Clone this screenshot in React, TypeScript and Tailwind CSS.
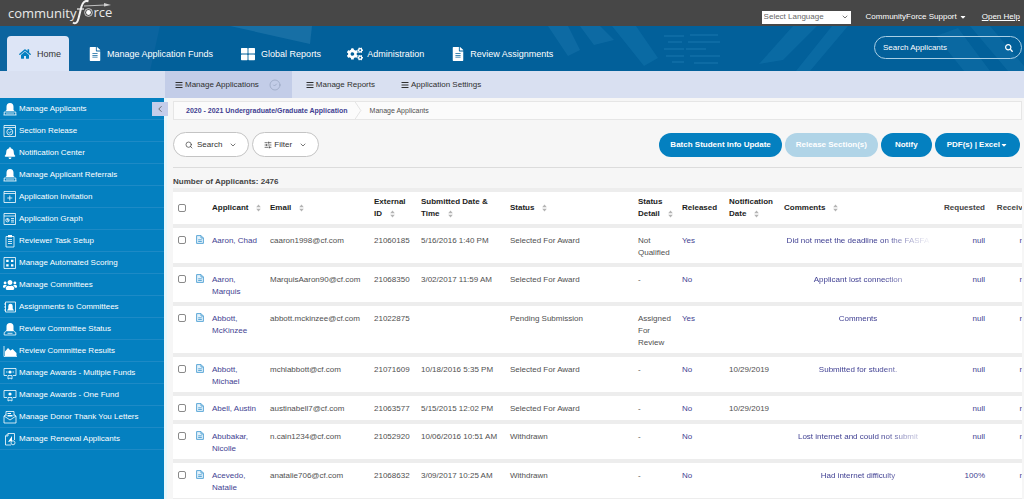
import type { ReactNode } from 'react';
import { FaBars, FaBell, FaCaretDown, FaCogs, FaFileAlt, FaHome, FaSearch, FaThLarge, FaUsers } from 'react-icons/fa';
import { ChevronDown, ChevronLeft, CircleCheck, Search, SlidersHorizontal } from 'lucide-react';

type Applicant = {
  name: string;
  email: string;
  id: string;
  submitted: string;
  status: string;
  detail: string;
  released: string;
  notified: string;
  comment: string;
  requested: string;
};

const applicants: Applicant[] = [
  { name: 'Aaron, Chad', email: 'caaron1998@cf.com', id: '21060185', submitted: '5/16/2016 1:40 PM', status: 'Selected For Award', detail: 'Not Qualified', released: 'Yes', notified: '', comment: 'Did not meet the deadline on the FASFA', requested: 'null' },
  { name: 'Aaron, Marquis', email: 'MarquisAaron90@cf.com', id: '21068350', submitted: '3/02/2017 11:59 AM', status: 'Selected For Award', detail: '-', released: 'No', notified: '', comment: 'Applicant lost connection', requested: 'null' },
  { name: 'Abbott, McKinzee', email: 'abbott.mckinzee@cf.com', id: '21022875', submitted: '', status: 'Pending Submission', detail: 'Assigned For Review', released: 'Yes', notified: '', comment: 'Comments', requested: 'null' },
  { name: 'Abbott, Michael', email: 'mchlabbott@cf.com', id: '21071609', submitted: '10/18/2016 5:35 PM', status: 'Selected For Award', detail: '-', released: 'No', notified: '10/29/2019', comment: 'Submitted for student.', requested: 'null' },
  { name: 'Abell, Austin', email: 'austinabell7@cf.com', id: '21063577', submitted: '5/15/2015 12:02 PM', status: 'Selected For Award', detail: '-', released: 'No', notified: '10/29/2019', comment: '', requested: 'null' },
  { name: 'Abubakar, Nicolle', email: 'n.cain1234@cf.com', id: '21052920', submitted: '10/06/2016 10:51 AM', status: 'Withdrawn', detail: '-', released: 'No', notified: '', comment: 'Lost internet and could not submit', requested: 'null' },
  { name: 'Acevedo, Natalie', email: 'anatalie706@cf.com', id: '21068632', submitted: '3/09/2017 10:25 AM', status: 'Withdrawn', detail: '-', released: 'No', notified: '', comment: 'Had internet difficulty', requested: '100%' },
];

function Glyph({ children }: { children: ReactNode }) {
  return (
    <svg viewBox="0 0 14 14" className="w-3.5 h-3.5 shrink-0" fill="none" stroke="white" strokeWidth="0.8">
      {children}
    </svg>
  );
}

const applicantGlyph = (
  <Glyph>
    <path d="M3.5 8V4.8a3.5 3.8 0 0 1 7 0V8l1 1H2.5z" fill="white" stroke="none" />
    <path d="M1.2 13V10h11.6v3M0.5 13h13M4 11v1.5M6 11v1.5M8 11v1.5M10 11v1.5" />
  </Glyph>
);

const sideLinks: { label: string; icon: ReactNode }[] = [
  { label: 'Manage Applicants', icon: applicantGlyph },
  { label: 'Section Release', icon: <Glyph><path d="M1 1.5h11.5v11H1zM1 3.5h11.5" /><circle cx="6.8" cy="8" r="3" /><path d="M5.4 8l1.1 1.1L8.4 7" /></Glyph> },
  { label: 'Notification Center', icon: <FaBell className="w-3.5 h-3 shrink-0 text-white" /> },
  { label: 'Manage Applicant Referrals', icon: applicantGlyph },
  { label: 'Application Invitation', icon: <Glyph><path d="M1 1.5h11.5v11H1zM1 3.5h11.5M6.8 5.5v5M4.3 8h5" /></Glyph> },
  { label: 'Application Graph', icon: <Glyph><path d="M1 1.5h11.5v11H1zM1 4h11.5M8 6.5h3M8 8.3h3M8 10h3" /><circle cx="4.5" cy="8.2" r="1.7" /><path d="M4.5 6.5v1.8h1.6" /></Glyph> },
  { label: 'Reviewer Task Setup', icon: <Glyph><path d="M3 2.5h8v10.5H3zM5 5.5h4M5 7.5h4M5 9.5h4" /><path d="M5 1h4v2.4H5z" fill="white" stroke="none" /></Glyph> },
  { label: 'Manage Automated Scoring', icon: <Glyph><path d="M1 1.5h11.5v11H1z" /><path d="M3.2 3.8h2.4v2.2H3.2zM8 3.8h2.4v2.2H8zM3.2 8.3h2.4v2.2H3.2zM8 8.3h2.4v2.2H8z" fill="white" stroke="none" /></Glyph> },
  { label: 'Manage Committees', icon: <FaUsers className="w-3.5 h-3.5 shrink-0 text-white" /> },
  { label: 'Assignments to Committees', icon: <Glyph><path d="M2.5 2h10v10h-10zM1 4h2M1 7h2M1 10h2" /><path d="M5.3 8.5V6a2.2 2.2 0 0 1 4.4 0v2.5l1.3 2H4z" fill="white" stroke="none" /></Glyph> },
  { label: 'Review Committee Status', icon: <Glyph><path d="M3.5 8V4.5a3.5 3.5 0 0 1 7 0V8l1 1.2H2.5z" fill="white" stroke="none" /><path d="M3 9.5L1.2 10.5V13h11.6v-2.5L11 9.5M4.5 11.3h5" /></Glyph> },
  { label: 'Review Committee Results', icon: <Glyph><path d="M1 2v10.5h13" /><path d="M2 12V7.5l3-3.5 2.5 2.5L9.5 5l4 4v3z" fill="white" stroke="none" /></Glyph> },
  { label: 'Manage Awards - Multiple Funds', icon: <Glyph><path d="M4 9.5H1v-7h12v7h-3M3 6h1.5M9.5 6H11" /><circle cx="7" cy="6" r="1.6" fill="white" stroke="none" /><path d="M5 9.5h4v3.5l-2-1-2 1z" /></Glyph> },
  { label: 'Manage Awards - One Fund', icon: <Glyph><path d="M4 9.5H1v-7h12v7h-3" /><circle cx="7" cy="6" r="1.6" fill="white" stroke="none" /><path d="M5 9.5h4v3.5l-2-1-2 1z" /></Glyph> },
  { label: 'Manage Donor Thank You Letters', icon: <Glyph><path d="M3 6V1.5h8V6M1 6l6 4 6-4v7H1zM1 6l2-1.5M13 6l-2-1.5" /><path d="M4.5 3h3.5v1H4.5zM4.5 5h5v1.5H4.5z" fill="white" stroke="none" /></Glyph> },
  { label: 'Manage Renewal Applicants', icon: <Glyph><path d="M5 1.5h6.5V8M5 1.5L2.5 4v9H8M5 1.5V4H2.5" /><path d="M5 10l4-6v5z" fill="white" stroke="none" /><circle cx="10" cy="10.8" r="2" /></Glyph> },
];

// Keeps the arrows on the same line as the last word of the heading
function SortLabel({ children }: { children: ReactNode }) {
  return (
    <span className="whitespace-nowrap">
      {children}
      <svg viewBox="0 0 5 8" className="inline-block w-[5px] h-2 ml-2" fill="#b4b4b4">
        <path d="M2.5 0.5L4.8 3.2H0.2zM2.5 7.5L4.8 4.8H0.2z" />
      </svg>
    </span>
  );
}

function DocIcon() {
  return (
    <svg viewBox="0 0 8 9" className="w-2 h-[9px]" fill="#e4f2fb" stroke="#4d9fd3" strokeWidth="0.9">
      <path d="M0.6 0.6h4.4L7.4 3v5.4H0.6zM5 0.6V3h2.4M2.2 4.8h3.6M2.2 6.5h3.6" />
    </svg>
  );
}

function Logo() {
  return (
    <a href="#" aria-label="communityforce" className="flex items-center h-full text-[#e9e9e9] font-['Open_Sans',sans-serif] text-[13px] leading-none">
      <span>community</span>
      <svg viewBox="0 0 37 26" className="w-[37px] h-[26px] -ml-1 overflow-visible" aria-hidden="true">
        <path d="M0 22.5c2.5 2 4.5 0 5.5-4L8.5 6.5C9.5 2.500 12 0 15.500 1.200" fill="none" stroke="#f2f2f2" strokeWidth="2" />
        <path d="M4 9h7" stroke="#f2f2f2" strokeWidth="1.2" />
        <path d="M11 6L32 5" stroke="#cfcfcf" strokeWidth="0.9" />
        <path d="M31 3l7 2-7 1.5z" fill="#cfcfcf" />
        <circle cx="15.5" cy="12.5" r="3.9" fill="none" stroke="#d9d9d9" strokeWidth="0.9" />
        <circle cx="15.5" cy="12.5" r="2.4" fill="#ffffff" />
        <text x="20.5" y="17" fill="#e9e9e9" fontSize="13">rce</text>
      </svg>
    </a>
  );
}

function HeaderPattern() {
  return (
    <svg viewBox="0 0 1024 45" preserveAspectRatio="xMidYMid slice" className="absolute inset-0 w-full h-full" aria-hidden="true">
      <path d="M0 0h160L150 45H0z" fill="#1468a3" opacity="0.5" />
      <path d="M230 0h82l-2 18z" fill="#4a93c0" opacity="0.3" />
      <path d="M548 0h20l12 24-12 6zM580 0h20l14 14-20 5z" fill="#3a94c8" opacity="0.2" />
      <path d="M612 0h24l22 32-14 8zM793 0h24l-34 34-24 4zM832 0h16l-38 45h-14z" fill="#2b8ec6" opacity="0.22" />
      <path d="M664 10h20M690 9h28M668 16h14M688 16h32M664 23h20M686 23h20M666 30h18M690 30h30M672 36h12M694 37h24" stroke="#3a98cc" strokeWidth="2" opacity="0.2" />
      <path d="M936 10l22-8 32 43h-26zM970 0h20l34 40v5h-16z" fill="#3b98cc" opacity="0.15" />
    </svg>
  );
}

export default function App() {
  return (
    <div className="min-h-screen flex flex-col overflow-hidden bg-[#f6f6f6] font-['Liberation_Sans',Arial,sans-serif] text-[8px] leading-3 text-[#505050]">
      <header>
        <div className="flex justify-between h-[26px] pl-2 pr-1 bg-[#474747] text-white">
          <Logo />
          <div className="flex items-center gap-[15px] pt-2">
            <div className="relative">
              <select aria-label="Select Language" className="block w-[89px] h-[13px] pl-0.5 appearance-none bg-white text-[#666]">
                <option>Select Language</option>
              </select>
              <ChevronDown className="absolute right-0.5 top-0.5 w-2 h-2 text-[#333] pointer-events-none" />
            </div>
            <button className="flex items-center gap-0.5">
              CommunityForce Support <FaCaretDown className="w-2 h-2" />
            </button>
            <a href="#" className="underline">Open Help</a>
          </div>
        </div>

        <div className="relative flex justify-between h-[45px] bg-[#02609a]">
          <HeaderPattern />
          <nav className="relative flex items-end pl-[7px] text-[9px] text-white">
            <a href="#" className="flex items-center gap-1.5 h-[35px] pl-3 pr-2 rounded-t bg-[#dde5f6] text-[#333]">
              <FaHome className="w-3 h-3 text-[#0480c0]" /> Home
            </a>
            <a href="#" className="flex items-center gap-1.5 h-[35px] ml-5">
              <FaFileAlt className="w-3 h-3.5" /> Manage Application Funds
            </a>
            <a href="#" className="flex items-center gap-1.5 h-[35px] ml-7">
              <FaThLarge className="w-3.5 h-3.5" /> Global Reports
            </a>
            <a href="#" className="flex items-center gap-1 h-[35px] ml-[26px]">
              <FaCogs className="w-4 h-4" /> Administration
            </a>
            <a href="#" className="flex items-center gap-1.5 h-[35px] ml-7">
              <FaFileAlt className="w-3 h-3.5" /> Review Assignments
            </a>
          </nav>
          <form className="relative flex items-center self-start w-[148px] h-[23px] mt-2.5 mr-0.5 px-2 rounded-full border border-[#a9cfe5]">
            <input type="text" aria-label="Search Applicants" placeholder="Search Applicants" className="min-w-0 flex-1 bg-transparent text-white placeholder:text-white outline-none" />
            <button type="button" aria-label="Search"><FaSearch className="w-2 h-2 text-white" /></button>
          </form>
        </div>

        <nav className="flex h-[27px] pl-[165px] bg-[#d9e0f1] text-[#2f2f2f]">
          <a href="#" className="flex items-center gap-0.5 pl-2.5 pr-[11px] bg-[#c3cde8]">
            <FaBars className="w-2 h-2" /> Manage Applications
            <CircleCheck className="w-3 h-3 ml-2 text-[#97a4bf]" strokeWidth={1.5} />
          </a>
          <a href="#" className="flex items-center gap-0.5 ml-3.5"><FaBars className="w-2 h-2" /> Manage Reports</a>
          <a href="#" className="flex items-center gap-0.5 ml-[26px]"><FaBars className="w-2 h-2" /> Application Settings</a>
        </nav>
      </header>

      <div className="flex flex-1">
        <aside className="relative w-[164px] shrink-0 bg-[#0480c0] text-white">
          <ul>
            {sideLinks.map((link) => (
              <li key={link.label}>
                <a href="#" className="flex items-center gap-0.5 h-[22px] pl-[3px] border-b border-[#1d8ac6]">
                  {link.icon}
                  {link.label}
                </a>
              </li>
            ))}
          </ul>
          <button aria-label="Collapse menu" className="absolute top-1 -right-1 flex items-center justify-center w-4 h-3.5 bg-[#c5cdea] text-[#555]">
            <ChevronLeft className="w-2.5 h-2.5" />
          </button>
        </aside>

        <main className="flex-1 min-w-0 pl-1.5 pr-0.5 border-l-3 border-[#e6f7fd]">
          <div className="flex items-stretch h-[19px] mt-[3px] pl-3 border border-[#e6e6e6] bg-[#fbfbfb] text-[7px]">
            <a href="#" className="flex items-center font-bold text-[#3f3f92]">2020 - 2021 Undergraduate/Graduate Application</a>
            <svg viewBox="0 0 8 18" className="w-2 ml-1.5" fill="none" stroke="#e2e2e2">
              <path d="M1 0l6 9-6 9" />
            </svg>
            <span className="flex items-center ml-2">Manage Applicants</span>
          </div>

          <div className="flex items-center justify-between pt-3 pb-2.5 border-b border-[#dcdcdc]">
            <div className="flex gap-[3px] text-[#333]">
              <button className="flex items-center h-[25px] px-[11px] rounded-full border border-[#c4c4c4] bg-white">
                <Search className="w-2 h-2 mr-1" /> Search <ChevronDown className="w-2 h-2 ml-[7px]" />
              </button>
              <button className="flex items-center h-[25px] px-[11px] rounded-full border border-[#c4c4c4] bg-white">
                <SlidersHorizontal className="w-2 h-2 mr-0.5" /> Filter <ChevronDown className="w-2 h-2 ml-[7px]" />
              </button>
            </div>
            <div className="flex gap-[3px] mr-0.5 text-white">
              <button className="h-6 px-[11px] rounded-full bg-[#0480c0] font-bold">Batch Student Info Update</button>
              <button disabled className="h-6 px-[11px] rounded-full bg-[#b0d4e7] font-bold">Release Section(s)</button>
              <button className="h-6 px-3.5 rounded-full bg-[#0480c0] font-bold">Notify</button>
              <button className="flex items-center h-6 px-3 rounded-full bg-[#0480c0] font-bold">
                PDF(s) | Excel <FaCaretDown className="w-2 h-2" />
              </button>
            </div>
          </div>

          <h1 className="mt-2 font-bold text-[#444]">Number of Applicants: 2476</h1>

          <div className="overflow-hidden">
            <table className="table-fixed w-full min-w-[864px] border-separate border-spacing-x-0 border-spacing-y-1 bg-[#ededed] text-left">
              <colgroup>
                <col className="w-[18px]" />
                <col className="w-4" />
                <col className="w-[58px]" />
                <col className="w-[104px]" />
                <col className="w-[47px]" />
                <col className="w-[89px]" />
                <col />
                <col className="w-11" />
                <col className="w-[47px]" />
                <col className="w-[55px]" />
                <col className="w-[158px]" />
                <col className="w-[53px]" />
                <col className="w-[47px]" />
              </colgroup>
              <thead>
                <tr className="h-8 bg-white text-[#1d1d1d] [&>th]:pl-[5px]">
                  <th><input type="checkbox" aria-label="Select all applicants" className="block w-2 h-2 appearance-none rounded-xs border border-[#8a8a8a] bg-white" /></th>
                  <th></th>
                  <th><SortLabel>Applicant</SortLabel></th>
                  <th><SortLabel>Email</SortLabel></th>
                  <th>External <SortLabel>ID</SortLabel></th>
                  <th>Submitted Date &amp; <SortLabel>Time</SortLabel></th>
                  <th><SortLabel>Status</SortLabel></th>
                  <th>Status <SortLabel>Detail</SortLabel></th>
                  <th>Released</th>
                  <th>Notification <SortLabel>Date</SortLabel></th>
                  <th><SortLabel>Comments</SortLabel></th>
                  <th className="pr-[5px] text-right text-[#444]">Requested</th>
                  <th className="pr-[5px] text-right text-[#444]">Received</th>
                </tr>
              </thead>
              <tbody>
                {applicants.map((a) => (
                  <tr key={a.id} className="h-6 bg-white align-top [&>td]:pl-[5px] [&>td]:pt-[7px] [&>td]:pb-1">
                    <td><input type="checkbox" aria-label={`Select ${a.name}`} className="block w-2 h-2 mt-px appearance-none rounded-xs border border-[#8a8a8a] bg-white" /></td>
                    <td><DocIcon /></td>
                    <td><a href="#" className="text-[#3f3f92]">{a.name}</a></td>
                    <td>{a.email}</td>
                    <td>{a.id}</td>
                    <td>{a.submitted}</td>
                    <td>{a.status}</td>
                    <td>{a.detail}</td>
                    <td><a href="#" className="text-[#3f3f92]">{a.released}</a></td>
                    <td>{a.notified}</td>
                    <td>
                      <a href="#" className="block w-[148px] overflow-hidden whitespace-nowrap text-center text-[#3f3f92] [mask-image:linear-gradient(to_right,black_66%,transparent)]">{a.comment}</a>
                    </td>
                    <td className="pr-[5px] text-right"><a href="#" className="text-[#3f3f92]">{a.requested}</a></td>
                    <td className="pr-[5px] text-right"><a href="#" className="text-[#3f3f92]">null</a></td>
                  </tr>
                ))}
              </tbody>
            </table>
          </div>
        </main>
      </div>
    </div>
  );
}
